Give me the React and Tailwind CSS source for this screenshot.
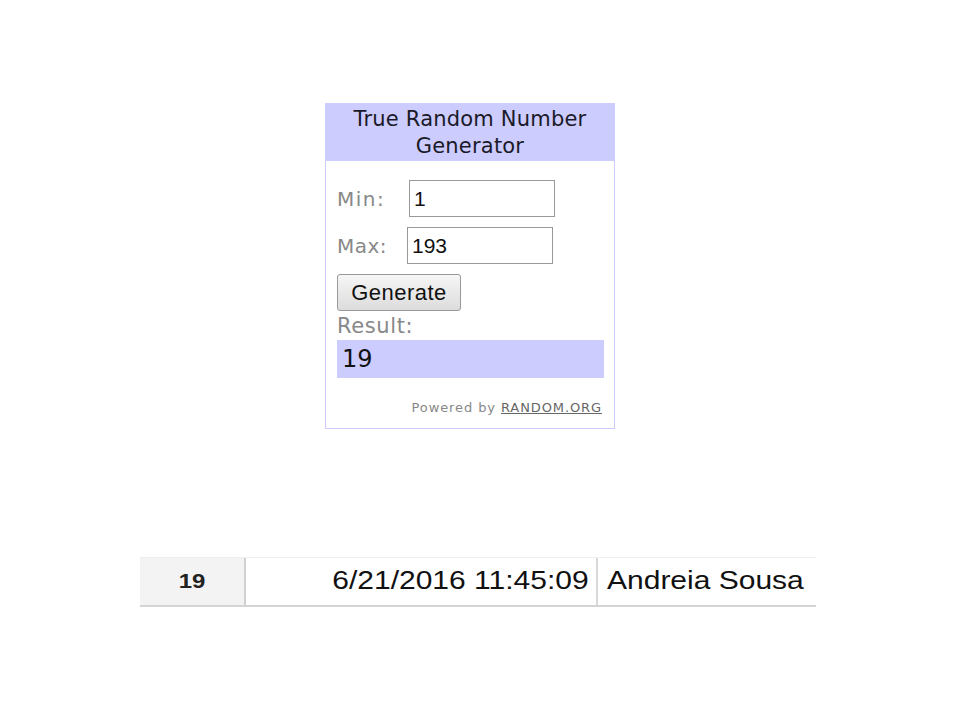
export default function App() {
  return (
    <div className="w-[960px] h-[720px] bg-white flex flex-col">
      <div className="ml-[325px] mt-[103px] w-[290px] border border-[#ccccff] font-['DejaVu_Sans',sans-serif]">
        <div className="h-[57px] bg-[#ccccff] flex flex-col items-center justify-center text-[21px] leading-[27px] text-[#1a1a28] tracking-[0.2px]">
          <div>True Random Number</div>
          <div>Generator</div>
        </div>
        <div className="pl-[11px] pr-[10px] pt-[19px] pb-[10px] flex flex-col">
          <div className="flex items-center h-[37px]">
            <span className="w-[72px] text-[20px] text-[#888] tracking-[1.5px]">Min:</span>
            <div className="w-[146px] h-[37px] border border-[#999] flex items-center pl-[4px] text-[21px] font-['Liberation_Sans',sans-serif] text-[#111]">1</div>
          </div>
          <div className="flex items-center h-[37px] mt-[10px]">
            <span className="w-[70px] text-[20px] text-[#888] tracking-[0.5px]">Max:</span>
            <div className="w-[146px] h-[37px] border border-[#999] flex items-center pl-[4px] text-[21px] font-['Liberation_Sans',sans-serif] text-[#111]">193</div>
          </div>
          <button className="mt-[10px] w-[124px] h-[37px] rounded-[3px] border border-[#999] bg-gradient-to-b from-[#f6f6f6] to-[#dcdcdc] text-[22px] tracking-[0.5px] font-['Liberation_Sans',sans-serif] text-[#111] flex items-center justify-center">
            Generate
          </button>
          <div className="mt-[2px] text-[21px] leading-[27px] text-[#888] tracking-[0.6px]">Result:</div>
          <div className="h-[38px] w-[267px] bg-[#ccccff] flex items-center pl-[5px] text-[24px] text-[#111]">19</div>
          <div className="mt-[20px] text-right text-[13px] text-[#888] pr-[2px] tracking-[0.9px]">
            Powered by <span className="underline text-[#666]">RANDOM.ORG</span>
          </div>
        </div>
      </div>

      <div className="ml-[140px] mt-[128px] w-[676px] h-[50px] flex border-t border-[#efefef] border-b-2 border-b-[#d4d4d4] font-['Liberation_Sans',sans-serif] text-[#111]">
        <div className="w-[106px] bg-[#f3f3f3] flex items-center justify-center border-r-2 border-[#d0d0d0]">
          <span className="inline-block text-[20px] font-bold text-[#222] scale-x-[1.2]">19</span>
        </div>
        <div className="w-[352px] flex items-center justify-end pr-[7px] border-r-2 border-[#d8d8d8]">
          <span className="inline-block text-[25px] scale-x-[1.2] origin-right">6/21/2016 11:45:09</span>
        </div>
        <div className="flex-1 flex items-center pl-[9px]">
          <span className="inline-block text-[25px] scale-x-[1.2] origin-left">Andreia Sousa</span>
        </div>
      </div>
    </div>
  );
}
